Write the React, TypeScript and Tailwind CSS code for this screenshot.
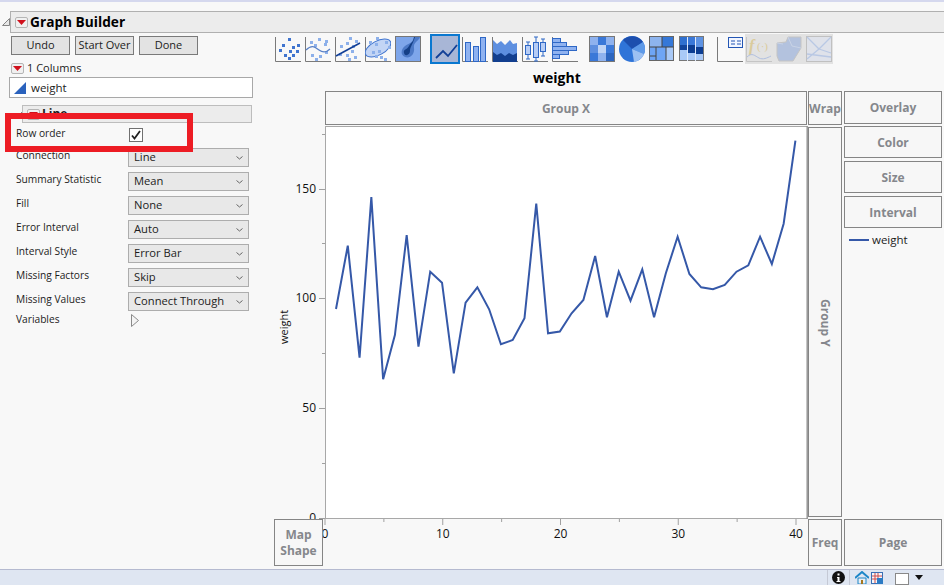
const font = "font-['Open_Sans','Liberation_Sans',sans-serif]";

const points = [
  309, 245.7, 357.7, 197, 379.3, 335, 235, 346.7, 271.7, 282.7, 373.3, 302.7, 287.3, 309.3, 344.3, 340, 318.3, 203.7,
  333.3, 331.5, 313.3, 300, 256, 317.3, 271.7, 300.7, 269.3, 317.3, 273.3, 236.7, 274, 287.3, 289.3, 285, 271.7, 265.3,
  236.7, 264, 223.7, 140.7,
];

const selectRows = [
  ["Connection", "Line"],
  ["Summary Statistic", "Mean"],
  ["Fill", "None"],
  ["Error Interval", "Auto"],
  ["Interval Style", "Error Bar"],
  ["Missing Factors", "Skip"],
  ["Missing Values", "Connect Through"],
];

function RedButton({ className = "" }: { className?: string }) {
  return (
    <span className={`flex h-[11px] w-[13px] shrink-0 items-center justify-center rounded-[2px] border border-[#b5b5b5] bg-[#f0f0f0] ${className}`}>
      <svg width="9" height="5" viewBox="0 0 9 5">
        <path d="M0 0h9L4.5 5z" fill="#d0101c" />
      </svg>
    </span>
  );
}

function Disclosure() {
  return (
    <svg width="8" height="8" viewBox="0 0 8 8" className="shrink-0">
      <path d="M7.5 .5v7H.5z" fill="#e8e8e8" stroke="#858585" />
    </svg>
  );
}

function Dots({ pts, fill = "#3f74cf" }: { pts: number[][]; fill?: string }) {
  return (
    <>
      {pts.map(([x, y]) => (
        <rect key={`${x}-${y}`} x={x} y={y} width="3" height="3" fill={fill} />
      ))}
    </>
  );
}

const Axes = () => <path d="M.5 1v24.5H26" fill="none" stroke="#7a7a7a" />;

function ToolIcon({ n }: { n: number }) {
  if (n === 1)
    return (
      <>
        <Axes />
        <Dots pts={[[13, 2], [7, 8], [17, 10], [22, 8], [4, 13], [14, 14], [21, 14], [9, 18], [17, 18], [13, 21]]} />
      </>
    );
  if (n === 2)
    return (
      <>
        <Axes />
        <Dots fill="#8db0ea" pts={[[13, 2], [5, 5], [20, 4], [9, 8], [19, 7], [6, 18], [14, 19], [10, 22], [20, 15]]} />
        <path d="M1 14c6-6 9-3 13 0s8 2 11-1" fill="none" stroke="#5a82c8" strokeWidth="1.2" />
      </>
    );
  if (n === 3)
    return (
      <>
        <Axes />
        <Dots fill="#8db0ea" pts={[[14, 1], [20, 4], [11, 6], [5, 9], [17, 9], [4, 17], [11, 18], [16, 14], [13, 22], [19, 20]]} />
        <path d="M1 20L25 7" stroke="#123f96" strokeWidth="1.6" />
      </>
    );
  if (n === 4)
    return (
      <>
        <Axes />
        <ellipse cx="13" cy="12" rx="14" ry="7" transform="rotate(-28 13 12)" fill="#c3d5f5" stroke="#3f74cf" />
        <Dots fill="#8db0ea" pts={[[11, 1], [4, 5], [10, 7], [20, 5], [7, 15], [13, 14], [15, 20], [19, 22], [10, 19], [23, 10]]} />
      </>
    );
  if (n === 5)
    return (
      <>
        <rect x=".5" y=".5" width="25" height="25" fill="#7ea6ea" stroke="#777" />
        <path d="M19 1c-1 6-5 6-9 9s-5 9 0 11 10-3 9-9 5-7 6-11z" fill="#4c79c6" />
        <path d="M19 1c-1 6-3 5-5 9s-6 3-5 7 6 2 6-2 2-5 5-14z" fill="#143f86" />
      </>
    );
  if (n === 6)
    return <path d="M4 22l7-7 5 5 9-11" fill="none" stroke="#123f96" strokeWidth="1.8" />;
  if (n === 7)
    return (
      <>
        <Axes />
        <g fill="#8fb2f0" stroke="#2f68c6">
          <rect x="3.5" y="6.5" width="5" height="19" />
          <rect x="11.5" y="10.5" width="5" height="15" />
          <rect x="18.5" y="1.5" width="5" height="24" />
        </g>
      </>
    );
  if (n === 8)
    return (
      <>
        <Axes />
        <path d="M1 4l4 4 4-3 4 4 5-5 3 4 4-1v18H1z" fill="#5d8fe0" />
        <path d="M1 16l4 3 4-2 4 3 4-3 4 2 4-2v9H1z" fill="#123f8f" />
      </>
    );
  if (n === 9)
    return (
      <>
        <Axes />
        <path d="M6 6v17M14 1v24M21 3v17M4 6h4M4 23h4M12 1h4M12 25h4M19 3h4M19 20h4" stroke="#2f68c6" />
        <g fill="#b7cdf5" stroke="#2f68c6">
          <rect x="3.5" y="9.5" width="5" height="9" />
          <rect x="11.5" y="6.5" width="5" height="15" />
          <rect x="18.5" y="6.5" width="5" height="9" />
        </g>
      </>
    );
  if (n === 10)
    return (
      <>
        <Axes />
        <g fill="#8fb2f0" stroke="#2f68c6">
          <rect x=".5" y="2.5" width="8" height="4" />
          <rect x=".5" y="6.5" width="14" height="4" />
          <rect x=".5" y="10.5" width="24" height="4" />
          <rect x=".5" y="14.5" width="16" height="4" />
          <rect x=".5" y="18.5" width="7" height="4" />
        </g>
      </>
    );
  if (n === 11)
    return (
      <>
        <rect x=".5" y=".5" width="25" height="25" fill="#8fb2ee" stroke="#777" />
        <rect x="1" y="9" width="8" height="8" fill="#5e8fdf" />
        <rect x="9" y="1" width="8" height="8" fill="#3a78d8" />
        <rect x="17" y="9" width="8" height="8" fill="#3a78d8" />
        <rect x="9" y="9" width="8" height="8" fill="#c0d4f5" />
        <rect x="1" y="17" width="8" height="8" fill="#3a78d8" />
        <rect x="17" y="17" width="8" height="8" fill="#2d66c0" />
      </>
    );
  if (n === 12)
    return (
      <>
        <circle cx="13" cy="13" r="13" fill="#2f74d8" />
        <path d="M13 13L24 6A13 13 0 0 0 4 4z" fill="#1d4fae" />
        <path d="M13 13L24 6a13 13 0 0 1 1 12z" fill="#5f9ae8" />
        <path d="M13 13l12 5a13 13 0 0 1-10 8z" fill="#9cc0f2" />
      </>
    );
  if (n === 13)
    return (
      <>
        <rect x=".5" y=".5" width="24" height="24" fill="#6ea5f5" stroke="#666" />
        <rect x="1" y="1" width="12" height="10" fill="#8db4ee" />
        <rect x="13" y="1" width="11" height="10" fill="#3578d8" />
        <rect x="17" y="11" width="7" height="13" fill="#a9c9f7" />
        <path d="M.5 11h24M13 1v10M7 11v13M17 11v13M1 20h6" stroke="#444" fill="none" />
      </>
    );
  if (n === 14)
    return (
      <>
        <rect x=".5" y=".5" width="24" height="24" fill="#a9c9f7" stroke="#777" />
        <rect x="1" y="1" width="7" height="12" fill="#2f70d0" />
        <rect x="1" y="9" width="7" height="5" fill="#12459c" />
        <rect x="9" y="1" width="7" height="8" fill="#3a78d8" />
        <rect x="9" y="9" width="7" height="8" fill="#0c3d92" />
        <rect x="17" y="1" width="7" height="10" fill="#5e93e3" />
        <rect x="17" y="11" width="7" height="7" fill="#0c3d92" />
        <path d="M8.5 1v24M16.5 1v24" stroke="#dfe9fa" />
      </>
    );
  if (n === 15)
    return (
      <>
        <Axes />
        <rect x="11.5" y="1.5" width="14" height="10" fill="#f2f6ff" stroke="#2456b4" />
        <path d="M14 5h4M14 8h4M20 5h4M20 8h4" stroke="#2456b4" />
      </>
    );
  if (n === 16)
    return (
      <>
        <path d="M.5 1v24.5H26" fill="none" stroke="#c5c5c5" />
        <text x="3" y="15" fontFamily="Liberation Serif" fontStyle="italic" fontWeight="700" fontSize="16" fill="#dacb9c">
          f
        </text>
        <text x="11" y="14" fontFamily="Liberation Serif" fontSize="11" fill="#dacb9c">
          (·)
        </text>
        <path d="M1 21c5-5 8-1 12 1s8 0 12-2" fill="none" stroke="#b0bfe0" />
      </>
    );
  if (n === 17)
    return (
      <>
        <path d="M1 7l9-1 2-5h13v11l-8 13H3l-2-5z" fill="#b3c2de" stroke="#c4c4c4" />
        <path d="M12 1l4 9 9 2M1 7l6 1" fill="none" stroke="#c9d3e6" />
      </>
    );
  return (
    <>
      <rect x=".5" y=".5" width="25" height="25" fill="#dfe2ea" stroke="#c0c0c0" />
      <path d="M1 1l12 12L25 1M13 13L1 23M13 13l12 4M1 18l24 3" fill="none" stroke="#b9c8e4" strokeWidth="1.3" />
    </>
  );
}

function Tool({ n, className = "" }: { n: number; className?: string }) {
  return (
    <svg width="26" height="26" viewBox="0 0 26 26" className={`shrink-0 ${className}`}>
      <ToolIcon n={n} />
    </svg>
  );
}

function Drop({ children, className = "" }: { children: React.ReactNode; className?: string }) {
  return (
    <div className={`flex items-center justify-center border border-[#858585] bg-[#f7f7f7] pt-px text-[12px] font-bold text-[#85878c] ${className}`}>
      {children}
    </div>
  );
}

function Chart() {
  const line = points.map((y, i) => `${336 - 274 + i * 11.78},${y - 126}`).join(" ");
  const majorY = [392, 282, 172, 63];
  const minorY = [337, 227, 117, 8];
  const xTicks = [0, 10, 20, 30, 40];
  const tx = (v: number) => 51 + v * 11.775;
  return (
    <svg width="534" height="444" viewBox="0 0 534 444" className="col-start-1 col-end-3 row-start-2 row-end-4">
      <rect x="51.5" y=".5" width="482" height="392" fill="#fff" stroke="#a8a8a8" />
      <path d="M533 0v393" stroke="#8c8c8c" />
      {majorY.map((y) => (
        <path key={y} d={`M45 ${y + 0.5}h6`} stroke="#a0a0a0" />
      ))}
      {minorY.map((y) => (
        <path key={y} d={`M48 ${y + 0.5}h3`} stroke="#a0a0a0" />
      ))}
      {xTicks.map((v) => (
        <path key={v} d={`M${tx(v)} 393v6`} stroke="#a0a0a0" />
      ))}
      {[5, 15, 25, 35].map((v) => (
        <path key={v} d={`M${tx(v)} 393v3`} stroke="#a0a0a0" />
      ))}
      <g fontSize="12" fill="#111" fontFamily="Open Sans, Liberation Sans, sans-serif">
        {[["150", 67], ["100", 176], ["50", 286], ["0", 396]].map(([t, y]) => (
          <text key={String(t)} x="42" y={Number(y)} textAnchor="end">{t}</text>
        ))}
        {xTicks.map((v) => (
          <text key={v} x={tx(v)} y="412" textAnchor="middle">{v}</text>
        ))}
        <text transform="translate(14 201) rotate(-90)" textAnchor="middle" fontSize="11">weight</text>
      </g>
      <polyline points={line} fill="none" stroke="#3558a8" strokeWidth="2" />
    </svg>
  );
}

export default function App() {
  return (
    <div className={`flex h-[585px] w-[944px] flex-col overflow-hidden bg-[#f8f8f8] text-[#1c1c1c] ${font}`}>
      <div className="h-[2px] shrink-0 bg-[#d5d8ee]" />
      <div className="mt-[9px] flex h-[22px] shrink-0 items-center">
        <span className="ml-[2px]">
          <Disclosure />
        </span>
        <div className="flex h-full flex-1 items-center border-y border-l border-[#b0b0b0] bg-[#ececec] pl-[4px]">
          <RedButton />
          <span className="ml-[2px] text-[13.7px] font-bold text-black">Graph Builder</span>
        </div>
      </div>

      <div className="flex min-h-0 flex-1">
        <div className="relative w-[274px] shrink-0">
          <div className="ml-[11px] mt-[3px] flex gap-[5px]">
            {["Undo", "Start Over", "Done"].map((b) => (
              <div key={b} className="flex h-[19px] w-[59px] items-center justify-center border border-[#7a7a7a] bg-[#e3e3e3] text-[11px]">
                {b}
              </div>
            ))}
          </div>
          <div className="ml-[11px] mt-[6px] flex h-[15px] items-center gap-[3px] text-[11px]">
            <RedButton />
            <span>1 Columns</span>
          </div>
          <div className="ml-[9px] mt-[1px] flex h-[21px] w-[244px] items-center gap-[5px] border border-[#a8a8a8] bg-white pl-[4px] text-[11.5px]">
            <svg width="12" height="12" viewBox="0 0 12 12">
              <path d="M12 0v12H0z" fill="#2a62bd" />
            </svg>
            weight
          </div>
          <div className="ml-[16px] mt-[7px] flex h-[18px] items-center">
            <Disclosure />
            <div className="ml-[-2px] flex h-full w-[230px] items-center gap-[2px] border border-[#bdbdbd] bg-[#ececec] pl-[4px]">
              <RedButton />
              <span className="text-[12px] font-bold">Line</span>
            </div>
          </div>
          <div className="ml-[16px] mt-[2px] flex h-[20px] items-center text-[10.2px]">
            <span className="mb-[2px] w-[113px]">Row order</span>
            <span className="flex h-[14px] w-[14px] items-center justify-center border border-[#707070] bg-white">
              <svg width="10" height="10" viewBox="0 0 10 10">
                <path d="M1 5.5l2.5 3L9 1" fill="none" stroke="#222" strokeWidth="1.8" />
              </svg>
            </span>
          </div>
          <div className="ml-[16px] mt-[3px] flex flex-col gap-[5px]">
            {selectRows.map(([label, value]) => (
              <div key={label} className="flex h-[19px] text-[10.2px]">
                <span className="w-[112px] leading-[15px]">{label}</span>
                <div className="flex w-[121px] items-center justify-between border border-[#adadad] bg-[#e8e8e8] px-[5px] text-[11.2px]">
                  {value}
                  <svg width="7" height="4" viewBox="0 0 7 4">
                    <path d="M.5.5l3 2.5 3-2.5" fill="none" stroke="#666" />
                  </svg>
                </div>
              </div>
            ))}
          </div>
          <div className="ml-[16px] mt-[1px] flex h-[16px] items-center text-[10.2px]">
            <span className="w-[115px]">Variables</span>
            <svg width="8" height="13" viewBox="0 0 8 13">
              <path d="M.5.5l7 6-7 6z" fill="#f4f4f4" stroke="#8a8a8a" />
            </svg>
          </div>
          {/* annotation drawn on top of the screenshot */}
          <div className="absolute left-[5px] top-[80px] h-[39px] w-[188px] border-[6px] border-[#ed1c24]" />
        </div>

        <div className="flex min-w-0 flex-1 flex-col">
          <div className="mt-[3px] flex h-[26px] shrink-0 items-center pl-px">
            <div className="flex gap-[4px]">
              {[1, 2, 3, 4, 5].map((n) => (
                <Tool key={n} n={n} />
              ))}
            </div>
            <div className="ml-[9px] flex h-[30px] w-[30px] items-center justify-center border-2 border-[#0a78d0] bg-[#a8b6d6]">
              <Tool n={6} />
            </div>
            <div className="ml-[2px] flex gap-[4px]">
              {[7, 8, 9, 10].map((n) => (
                <Tool key={n} n={n} />
              ))}
            </div>
            <div className="ml-[11px] flex gap-[4px]">
              {[11, 12, 13, 14].map((n) => (
                <Tool key={n} n={n} />
              ))}
            </div>
            <div className="ml-[12px]">
              <Tool n={15} />
            </div>
            <div className="ml-[2px] flex h-[30px] items-center gap-[4px] bg-[#e2e2e2] px-px">
              {[16, 17, 18].map((n) => (
                <Tool key={n} n={n} />
              ))}
            </div>
          </div>

          <div className="h-[29px] shrink-0 pl-[259px] pt-[6px] text-[14px] font-bold leading-[19px] text-black">weight</div>

          <div className="grid flex-1 grid-cols-[51px_483px_36px_100px] grid-rows-[35px_393px_51px]">
            <Drop className="col-start-2 row-start-1 h-[34px] w-[482px]">Group X</Drop>
            <Drop className="col-start-3 row-start-1 h-[34px] w-[34px] text-[11.2px]">Wrap</Drop>
            <Drop className="col-start-4 row-start-1 h-[33px] w-[98px]">Overlay</Drop>
            <Chart />
            <Drop className="col-start-3 row-start-2 mb-[2px] mt-px w-[34px]">
              <span className="[writing-mode:vertical-rl]">Group Y</span>
            </Drop>
            <div className="col-start-4 row-start-2 flex flex-col gap-[3px]">
              {["Color", "Size", "Interval"].map((d) => (
                <Drop key={d} className="h-[32px] w-[98px]">
                  {d}
                </Drop>
              ))}
              <div className="flex items-center gap-[3px] pl-[5px] text-[11.5px]">
                <span className="h-[2px] w-[20px] bg-[#3558a8]" />
                weight
              </div>
            </div>
            <Drop className="col-start-1 row-start-3 h-[47px] w-[49px] text-center leading-[16px]">
              Map
              <br />
              Shape
            </Drop>
            <Drop className="col-start-3 row-start-3 h-[47px] w-[34px]">Freq</Drop>
            <Drop className="col-start-4 row-start-3 h-[47px] w-[98px]">Page</Drop>
          </div>
        </div>
      </div>

      <div className="flex h-[16px] shrink-0 items-center justify-end border-t border-[#b5bad0] bg-[#dfe6f2] pr-[21px]">
        <div className="flex h-full w-[23px] items-center justify-center border-x border-[#c5c9d5]">
          <svg width="13" height="13" viewBox="0 0 13 13">
            <circle cx="6.5" cy="6.5" r="6.5" fill="#111" />
            <path d="M5.5 2.5h2v2h-2zM5 6h2.5v4H8.5v1h-4v-1H5.5V7H5z" fill="#fff" />
          </svg>
        </div>
        <svg width="14" height="13" viewBox="0 0 14 13" className="ml-[5px]">
          <path d="M0 7l7-6 7 6" fill="none" stroke="#1c86c8" strokeWidth="2" />
          <path d="M3 7h8v6H3z" fill="#e8eef5" stroke="#1c86c8" />
          <rect x="6" y="9" width="2" height="4" fill="#a6761d" />
        </svg>
        <svg width="12" height="12" viewBox="0 0 12 12" className="ml-[2px]">
          <rect x=".5" y=".5" width="11" height="11" fill="#f4f6fa" stroke="#3a6fb5" />
          <path d="M1 4h10M1 7h6M4 1v10M7 1v6" stroke="#d04a4a" />
          <path d="M6 6h6v6H6z" fill="#2c7bc4" />
        </svg>
        <span className="ml-[12px] mt-[3px] h-[12px] w-[14px] border border-[#888] bg-white" />
        <svg width="8" height="5" viewBox="0 0 8 5" className="ml-[6px]">
          <path d="M0 0h8L4 5z" fill="#111" />
        </svg>
      </div>
    </div>
  );
}
